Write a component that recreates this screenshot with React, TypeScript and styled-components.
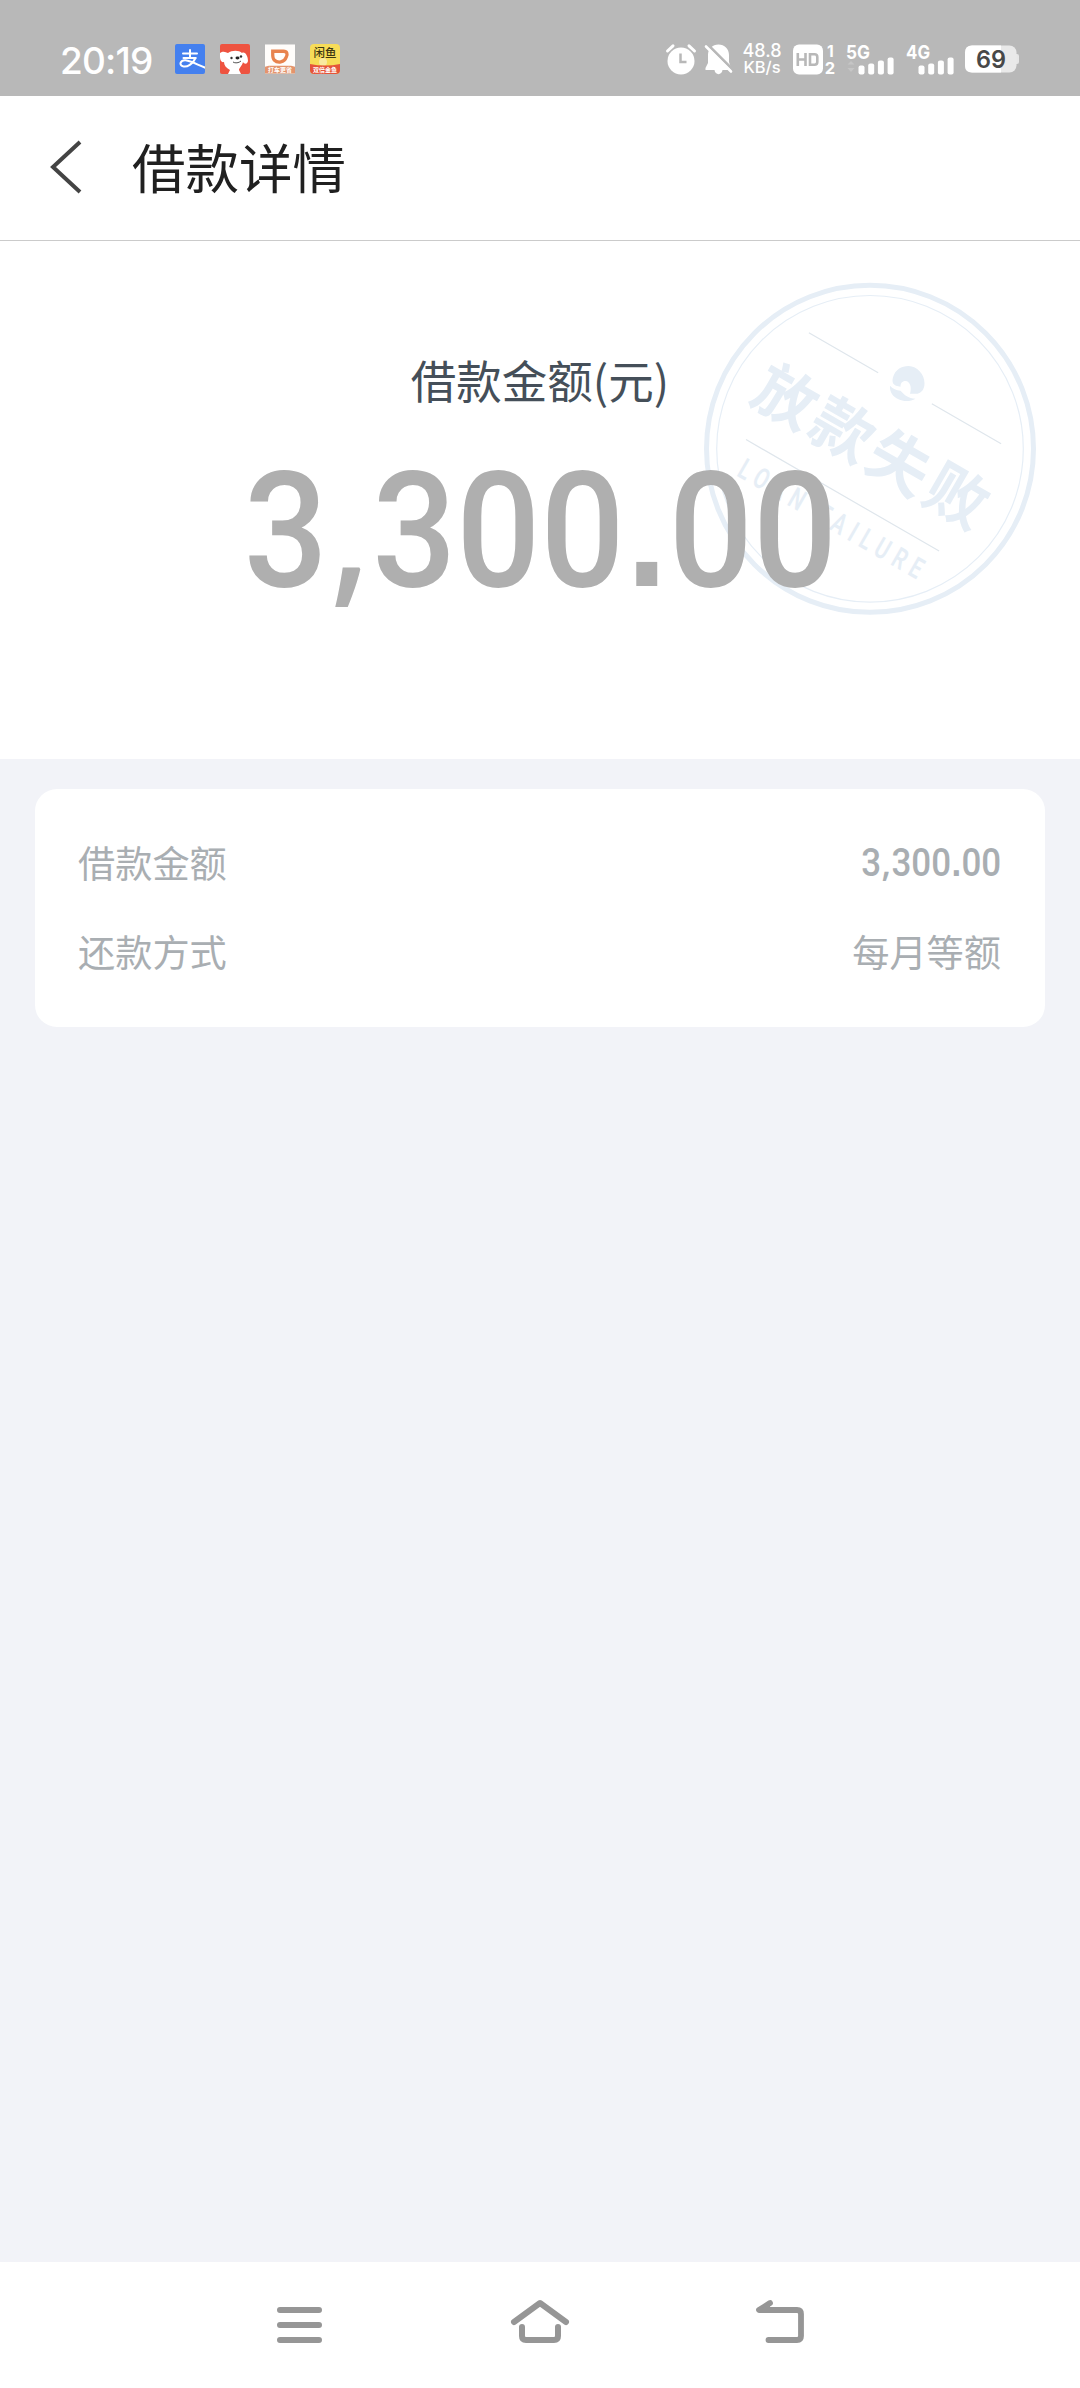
import styled, { createGlobalStyle } from "styled-components";

const GlobalStyle = createGlobalStyle`
  * {
    box-sizing: border-box;
  }
  body {
    margin: 0;
    background-color: #f2f3f8;
    font-family: "Noto Sans CJK SC", "Noto Sans", sans-serif;
  }
`;

const Screen = styled.div`
  display: flex;
  flex-direction: column;
  width: 1080px;
  height: 2388px;
  overflow: hidden;
`;

const StatusBar = styled.div`
  display: flex;
  align-items: center;
  height: 96px;
  padding: 22px 61px 0 60px;
  background-color: #b8b8b8;
  color: white;
`;
const Clock = styled.span`
  width: 115px;
  font-family: Inter, sans-serif;
  font-size: 37px;
  font-weight: 500;
  line-height: 40px;
  letter-spacing: -0.8px;
  padding-top: 4px;
`;
const AppIcons = styled.div`
  display: flex;
  gap: 15px;
`;
const StatusIcons = styled.div`
  display: flex;
  align-items: center;
  margin-left: auto;
`;
const StatusIcon = styled.svg<{ $gap?: number }>`
  display: block;
  overflow: visible;
  margin-left: ${(props) => props.$gap ?? 0}px;
`;
const Speed = styled.div`
  display: flex;
  flex-direction: column;
  align-items: center;
  width: 40px;
  margin-left: 10px;
  font-family: Inter, sans-serif;
  font-weight: 500;
`;
const SpeedValue = styled.span`
  font-size: 18px;
  line-height: 17px;
`;
const SpeedUnit = styled.span`
  font-size: 16.5px;
  line-height: 17px;
`;

const Header = styled.header`
  display: flex;
  align-items: center;
  height: 145px;
  padding: 0 0 2px 48px;
  background-color: white;
  border-bottom: 1px solid #cbcbcb;
`;
const Title = styled.h1`
  margin: -3px 0 0 50px;
  font-size: 53.5px;
  font-weight: 400;
  line-height: 80px;
  color: #202020;
`;

const Hero = styled.section`
  position: relative;
  display: flex;
  flex-direction: column;
  align-items: center;
  height: 518px;
  padding-top: 104px;
  background-color: white;
`;
const HeroLabel = styled.div`
  position: relative;
  z-index: 1;
  font-size: 45.5px;
  line-height: 68px;
  color: #454f59;
`;
const Stamp = styled.svg`
  position: absolute;
  top: 19px;
  right: 20px;
`;

const Amount = styled.span<{ $size: number; $origin: string }>`
  display: block;
  font-family: Roboto, sans-serif;
  font-size: ${(props) => props.$size}px;
  font-weight: 500;
  line-height: 1.2;
  transform: scaleX(0.92);
  transform-origin: ${(props) => props.$origin};
`;
const Separator = styled.span<{ $font: string }>`
  display: inline-block;
  width: 0.298em;
  font-family: ${(props) => props.$font}, sans-serif;
  font-weight: 600;
  line-height: 1;
  text-align: center;
`;
const HeroAmount = styled.div`
  position: relative;
  z-index: 1;
  margin-top: 22px;
  color: #afafaf;
`;

const Card = styled.section`
  display: flex;
  flex-direction: column;
  gap: 33px;
  height: 238px;
  margin: 30px 35px 0;
  padding: 45px 44px 0 43px;
  border-radius: 22px;
  background-color: white;
`;
const Row = styled.div`
  display: flex;
  align-items: center;
  justify-content: space-between;
  height: 56px;
  font-size: 37.2px;
  line-height: 56px;
  color: #a9aeb2;
`;
const RowAmount = styled.div`
  padding-top: 4px;
`;

const NavBar = styled.nav`
  display: flex;
  align-items: center;
  justify-content: center;
  gap: 182px;
  height: 126px;
  margin-top: auto;
  padding-bottom: 4px;
  background-color: white;
`;

const STAMP_COLOR = "#e6eef6";

const FormattedAmount = ({ value }: { value: string }) => (
  <>
    {value.split(/([,.])/).map((part, index) =>
      /[,.]/.test(part) ? (
        <Separator
          key={index}
          $font={part === "," ? '"Open Sans"' : '"Liberation Sans"'}
        >
          {part}
        </Separator>
      ) : (
        part
      )
    )}
  </>
);

const AlipayIcon = () => (
  <svg width="30" height="30" viewBox="0 0 30 30">
    <rect width="30" height="30" rx="2" fill="#4480ef" />
    <g fill="none" stroke="white" strokeWidth="2" strokeLinecap="round">
      <path d="M8 9.5h14M15 6v8M8.5 14h12" />
      <path d="M20.500 14C18 20 12 23.500 8 22.300C3.500 20.800 5.500 16 10.500 16.300C16 17 22 20.500 31 24" />
    </g>
  </svg>
);

const DogIcon = () => (
  <svg width="30" height="30" viewBox="0 0 30 30">
    <rect width="30" height="30" rx="2" fill="#ee5340" />
    <path
      d="M0 9C3 6.500 6 8 8 9C12 6 19 6 22 9C25 7 28 12 28 17C27 21 24 20 23 18C22 22 19 24 19 26L21 30H8L10 26C6 24 4 21 4 18C1 19 0 15 0 13Z"
      fill="white"
    />
    <circle cx="11.500" cy="14" r="1.200" fill="#333" />
    <circle cx="21" cy="12.500" r="1.200" fill="#333" />
    <ellipse cx="17.500" cy="14" rx="2" ry="1.400" fill="#222" />
    <path d="M13 18C15 19.500 19 19 21 17" fill="none" stroke="#555" />
  </svg>
);

const DidiIcon = () => (
  <svg width="30" height="30" viewBox="0 0 31 30">
    <rect width="31" height="30" fill="#fffdfb" />
    <path
      d="M8 7H19C23 7 23.500 10 22 13C20 19 13 19.500 9.500 16C7.500 14 8 10 8 7Z"
      fill="none"
      stroke="#e8834e"
      strokeWidth="3.400"
    />
    <path d="M0 23L4 22H27L31 23V30H0Z" fill="#e4946d" />
    <text
      x="15.500"
      y="28.500"
      textAnchor="middle"
      fontSize="6.200"
      fontWeight="700"
      fill="white"
    >
      打车更省
    </text>
  </svg>
);

const XianyuIcon = () => (
  <svg width="30" height="30" viewBox="0 0 30 30">
    <clipPath id="xianyu">
      <rect width="30" height="30" rx="4" />
    </clipPath>
    <g clipPath="url(#xianyu)">
      <rect width="30" height="30" fill="#f7dc58" />
      <circle cx="13" cy="18" r="4" fill="#f9eaa0" />
      <path d="M0 20Q15 23 30 20V30H0Z" fill="#e5543a" />
      <text
        x="15"
        y="12.500"
        textAnchor="middle"
        fontSize="11.500"
        fontWeight="500"
        fill="#3c3714"
      >
        闲鱼
      </text>
      <text
        x="15"
        y="27.500"
        textAnchor="middle"
        fontSize="6"
        fontWeight="700"
        fill="white"
      >
        双倍金鱼
      </text>
    </g>
  </svg>
);

const AlarmIcon = () => (
  <StatusIcon width="30" height="31" viewBox="0 0 30 31">
    <circle cx="15" cy="17" r="13.500" fill="white" />
    <path
      d="M1.500 7L7 1.800M28.500 7L23 1.800"
      stroke="white"
      strokeWidth="3"
      strokeLinecap="round"
    />
    <path d="M14.500 9.500V18H20.500" fill="none" stroke="#b8b8b8" strokeWidth="2.500" />
  </StatusIcon>
);

const BellOffIcon = () => (
  <StatusIcon $gap={9} width="27" height="31" viewBox="0 0 27 31">
    <path
      d="M13.500 0.500C19.500 0.500 24 5 24 11V18L26 24V26H17.500C17 31.500 10 31.500 9.500 26H0.500V24L3 19V11C3 5 7.500 0.500 13.500 0.500Z"
      fill="white"
    />
    <path d="M2 0L28 26" stroke="#b8b8b8" strokeWidth="3" />
    <path d="M1 2.500L26 27.500" stroke="white" strokeWidth="2.600" strokeLinecap="round" />
  </StatusIcon>
);

const HdIcon = () => (
  <StatusIcon $gap={11} width="43" height="31" viewBox="0 0 43 31">
    <rect y="0.500" width="30" height="30" rx="6" fill="white" />
    <path
      d="M4.800 9V22M12.500 9V22M4.800 15.500H12.500M17 10.300H21.500Q24.300 10.300 24.300 13V18Q24.300 20.700 21.500 20.700H17Z"
      fill="none"
      stroke="#b8b8b8"
      strokeWidth="2.600"
    />
    <g fill="white" fontFamily="Inter, sans-serif" fontWeight="700">
      <text x="34" y="13" fontSize="15.500">
        1
      </text>
      <text x="31.800" y="30" fontSize="16.500">
        2
      </text>
    </g>
  </StatusIcon>
);

const SignalIcon = ({ label, gap }: { label: string; gap: number }) => (
  <StatusIcon $gap={gap} width="48" height="31" viewBox="0 0 48 31">
    <text
      x="0"
      y="14.500"
      fontSize="19"
      fontWeight="700"
      fontFamily="Inter, sans-serif"
      textLength="24"
      lengthAdjust="spacingAndGlyphs"
      fill="white"
    >
      {label}
    </text>
    {[9, 11, 14, 17].map((height, index) => (
      <rect
        key={height}
        x={12.5 + index * 9.7}
        y={30.5 - height}
        width="6"
        height={height}
        rx="2"
        fill="white"
      />
    ))}
    {label === "5G" && (
      <path d="M1.500 20.500L5 17L8.500 20.500ZM1.500 24L5 28L8.500 24Z" fill="#c5c5c5" />
    )}
  </StatusIcon>
);

const BatteryIcon = () => (
  <StatusIcon $gap={11} width="54" height="28" viewBox="0 0 54 28">
    <rect x="48" y="9" width="6" height="10" rx="2" fill="#e6e6e6" />
    <rect y="0.500" width="51.500" height="27" rx="7" fill="#e9e9e9" />
    <path d="M7 0.500H36V27.500H7Q0 27.500 0 20.500V7.500Q0 0.500 7 0.500Z" fill="white" />
    <text
      x="26"
      y="23"
      textAnchor="middle"
      fontSize="24.500"
      fontWeight="600"
      fontFamily="Inter, sans-serif"
      textLength="30"
      lengthAdjust="spacingAndGlyphs"
      fill="#484848"
    >
      69
    </text>
  </StatusIcon>
);

const FailureStamp = () => (
  <Stamp width="380" height="380" viewBox="-190 -188.800 380 380">
    <g fill="none" stroke={STAMP_COLOR}>
      <circle r="163.500" strokeWidth="5" />
      <circle r="153.300" strokeWidth="1.200" />
    </g>
    <g transform="rotate(30)" fill={STAMP_COLOR}>
      <path
        d="M-111 -70H-31M31 -70H111M-112 54H111"
        stroke="#dfe6ec"
        strokeWidth="1.200"
      />
      <text
        x="2"
        y="20"
        textAnchor="middle"
        fontSize="62"
        fontWeight="700"
        letterSpacing="4"
      >
        放款失败
      </text>
      <text
        transform="translate(-103 90) scale(0.7 1)"
        fontSize="29"
        fontWeight="600"
        fontFamily="Roboto, sans-serif"
        textLength="298"
        lengthAdjust="spacing"
      >
        LOAN FAILURE
      </text>
    </g>
    {/* Brand mark between the two upper rules */}
    <g transform="translate(18.500 -83.500)" fill={STAMP_COLOR}>
      <path d="M7.500 20.400C4 19 3.500 16 4.500 12C6.500 4.500 13 0.700 20 0.700C29 1 36 9 36 18C36 24 33 27.500 29 28.500H21.500C23.500 22 21.500 16 17 15.700C13.500 15.700 12 18 12 21.400Z" />
      <path d="M1.500 20.400C4 23.500 8 25 12 25.500C16 30 20 33 27 33.500C22 36.500 15 36.500 10 34C4.500 31.500 1 27 1.500 20.400Z" />
    </g>
  </Stamp>
);

const App = () => {
  return (
    <>
      <GlobalStyle />
      <Screen>
        <StatusBar>
          <Clock>20:19</Clock>
          <AppIcons>
            <AlipayIcon />
            <DogIcon />
            <DidiIcon />
            <XianyuIcon />
          </AppIcons>
          <StatusIcons>
            <AlarmIcon />
            <BellOffIcon />
            <Speed>
              <SpeedValue>48.8</SpeedValue>
              <SpeedUnit>KB/s</SpeedUnit>
            </Speed>
            <HdIcon />
            <SignalIcon label="5G" gap={10} />
            <SignalIcon label="4G" gap={12} />
            <BatteryIcon />
          </StatusIcons>
        </StatusBar>
        <Header>
          <svg width="34" height="54" viewBox="0 0 34 54">
            <path
              d="M32 2L5 27L32 52"
              fill="none"
              stroke="#444"
              strokeWidth="4"
            />
          </svg>
          <Title>借款详情</Title>
        </Header>
        <Hero>
          <FailureStamp />
          <HeroLabel>借款金额(元)</HeroLabel>
          <HeroAmount>
            <Amount $size={161} $origin="center">
              <FormattedAmount value="3,300.00" />
            </Amount>
          </HeroAmount>
        </Hero>
        <Card>
          <Row>
            <span>借款金额</span>
            <RowAmount>
              <Amount $size={38} $origin="right">
                <FormattedAmount value="3,300.00" />
              </Amount>
            </RowAmount>
          </Row>
          <Row>
            <span>还款方式</span>
            <span>每月等额</span>
          </Row>
        </Card>
        <NavBar>
          <svg width="60" height="48" viewBox="0 0 60 48">
            <path
              d="M12 11H51M12 26H51M12 41H51"
              stroke="#969696"
              strokeWidth="6"
              strokeLinecap="round"
            />
          </svg>
          <svg width="60" height="48" viewBox="0 0 60 48">
            <g
              fill="none"
              stroke="#969696"
              strokeWidth="6"
              strokeLinecap="round"
              strokeLinejoin="round"
            >
              <path d="M4 23L30 4L56 23" />
              <path d="M12 28V37Q12 41 16 41H44Q48 41 48 37V28" />
            </g>
          </svg>
          <svg width="60" height="48" viewBox="0 0 60 48">
            <path
              d="M18 4L7 11H45Q49 11 49 15V37Q49 41 45 41H16.500"
              fill="none"
              stroke="#969696"
              strokeWidth="5.800"
              strokeLinecap="round"
              strokeLinejoin="round"
            />
            <path d="M7 11L18 4V11Z" fill="#969696" />
          </svg>
        </NavBar>
      </Screen>
    </>
  );
};

export default App;
